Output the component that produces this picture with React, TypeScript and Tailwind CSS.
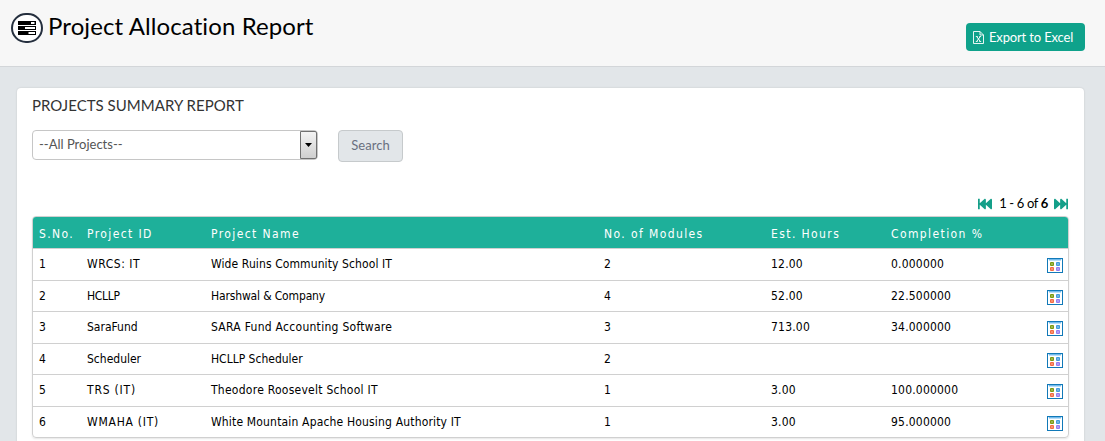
import { FaFastBackward, FaFastForward } from "react-icons/fa";

const rows = [
  { cells: ["1", "WRCS: IT", "Wide Ruins Community School IT", "2", "12.00", "0.000000"], id: "tracking-[0.55px]", name: "tracking-[0.1px]" },
  { cells: ["2", "HCLLP", "Harshwal & Company", "4", "52.00", "22.500000"], id: "tracking-[-0.3px]", name: "tracking-[-0.15px]" },
  { cells: ["3", "SaraFund", "SARA Fund Accounting Software", "3", "713.00", "34.000000"], id: "tracking-[0px]", name: "tracking-[0.28px]" },
  { cells: ["4", "Scheduler", "HCLLP Scheduler", "2", "", ""], id: "tracking-[0px]", name: "tracking-[0px]" },
  { cells: ["5", "TRS (IT)", "Theodore Roosevelt School IT", "1", "3.00", "100.000000"], id: "tracking-[0.8px]", name: "tracking-[0.26px]" },
  { cells: ["6", "WMAHA (IT)", "White Mountain Apache Housing Authority IT", "1", "3.00", "95.000000"], id: "tracking-[0.75px]", name: "tracking-[0.17px]" },
];
const heads = ["S.No.", "Project ID", "Project Name", "No. of Modules", "Est. Hours", "Completion %"];
const columns = "grid grid-cols-[48px_124px_393px_167px_120px_156px_1fr] pl-1.5";

function TasksIcon() {
  return (
    <svg width="18" height="14" viewBox="0 0 18 14">
      <path d="M0 0h18v4H0zM0 5h18v4H0zM0 10h18v4H0z" fill="#000" />
      <path d="M13 1h3.5v2H13zM7 6h10v2H7zM10.5 11H17v2h-6.5z" fill="#fff" />
    </svg>
  );
}

function ExcelIcon() {
  return (
    <svg className="mr-[5px]" width="11" height="13" viewBox="0 0 11 13" fill="none" stroke="#fff">
      <path d="M.5 .5h6.5l3.5 3.5v8.5H.5zM7 .5V4h3.5" strokeWidth=".9" />
      <path d="M3.7 5.5l3.6 5M7.3 5.5l-3.6 5" strokeWidth="1" />
      <path d="M2.8 5.5h2M6.2 5.5h1.9M2.8 10.5h1.9M6.2 10.5h2" strokeWidth=".8" />
    </svg>
  );
}

function DetailsIcon() {
  return (
    <svg width="16" height="15" viewBox="0 0 16 15">
      <rect x=".5" y=".5" width="15" height="14" fill="#fff" stroke="#1179b8" />
      <path d="M1 1h14v1H1z" fill="#d4ebfa" />
      <path d="M2 1h12v1.5H2z" fill="#72bbed" />
      <rect x="3" y="4" width="4" height="4" rx="1" fill="#7b9a12" />
      <rect x="9" y="4" width="4" height="4" rx="1" fill="#419bdd" />
      <rect x="3" y="9" width="4" height="4" rx="1" fill="#f56b43" />
      <rect x="9" y="9" width="4" height="4" rx="1" fill="#947bf1" />
      <path d="M4 5h2v2H4zM10 5h2v2h-2zM4 10h2v2H4zM10 10h2v2h-2z" fill="#fff" fillOpacity=".25" />
    </svg>
  );
}

export default function App() {
  return (
    <div className="h-[441px] overflow-hidden bg-[#e2e6e9] font-['Lato',sans-serif] text-black">
      <header className="flex h-[67px] items-start justify-between border-b border-[#d3d6d9] bg-[#f7f7f7] pl-[11px] pr-5">
        <div className="flex items-start">
          <span className="mt-[13px] flex h-[30px] w-8 items-center justify-center rounded-full border-2 border-[#252f3e] bg-white">
            <TasksIcon />
          </span>
          <h1 className="ml-[5px] mt-2 whitespace-nowrap text-[24px] leading-9 tracking-[0.1px] [font-variant-ligatures:none]">Project Allocation Report</h1>
        </div>
        <button className="mt-[23px] flex h-7 w-[119px] items-center rounded bg-[#0fa28b] pl-[7px] pt-px text-[13px] tracking-[-0.15px] text-white">
          <ExcelIcon />
          <span className="whitespace-nowrap">Export to Excel</span>
        </button>
      </header>
      <main className="ml-[17px] mr-[21px] mt-[21px] h-[370px] rounded-t bg-white px-[15px] shadow-[0_0_2px_rgba(0,0,0,0.15)]">
        <h2 className="pt-[7px] text-[15px] leading-5 tracking-[0.03px] text-[#333]">PROJECTS SUMMARY REPORT</h2>
        <div className="mt-[15px] flex h-8 items-start">
          <div className="flex h-[30px] w-[286px] items-center justify-between rounded border border-[#c6c6c6] pl-1.5 text-[13px] text-[#555]">
            <span>--All Projects--</span>
            <span className="flex h-7 w-[17px] items-center justify-center rounded-r-[2px] border border-[#707070] bg-linear-to-b from-[#f3f3f3] to-[#cfcfcf]">
              <svg width="7" height="4" viewBox="0 0 7 4"><path d="M0 0h7L3.5 4z" /></svg>
            </span>
          </div>
          <button className="ml-5 h-8 w-[65px] rounded border border-[#c6cacc] bg-[#e2e6e9] text-[13px] tracking-[0.05px] text-[#697080]">Search</button>
        </div>
        <div className="mr-px mt-[31px] flex h-[22px] items-center justify-end text-[13px]">
          <FaFastBackward className="mr-[7px] h-3.5 w-3.5 text-[#149f89]" />
          <span className="whitespace-nowrap tracking-[-0.35px]">1 - 6 of <b>6</b></span>
          <FaFastForward className="ml-1.5 h-3.5 w-3.5 text-[#149f89]" />
        </div>
        <section className="mt-px w-[1037px] rounded border border-[#d0d0d0] font-['DejaVu_Sans_Condensed','DejaVu_Sans',sans-serif] text-[12px] shadow-[0_1px_2px_rgba(0,0,0,0.1)]">
          <div className={`${columns} h-[31px] rounded-t-[3px] bg-[#1eb09a] leading-[34px] tracking-[1.4px] text-white`}>
            {heads.map((head) => <span key={head} className="whitespace-nowrap">{head}</span>)}
          </div>
          {rows.map(({ cells, id, name }) => (
            <div key={cells[0]} className={`${columns} h-[31.5px] border-t border-[#d0d0d0] leading-[30px]`}>
              <span>{cells[0]}</span>
              <span className={`whitespace-nowrap ${id}`}>{cells[1]}</span>
              <span className={`whitespace-nowrap ${name}`}>{cells[2]}</span>
              <span>{cells[3]}</span>
              <span className="tracking-[0.2px]">{cells[4]}</span>
              <span className="tracking-[0.2px]">{cells[5]}</span>
              <span className="pt-[9px]"><DetailsIcon /></span>
            </div>
          ))}
        </section>
      </main>
    </div>
  );
}
